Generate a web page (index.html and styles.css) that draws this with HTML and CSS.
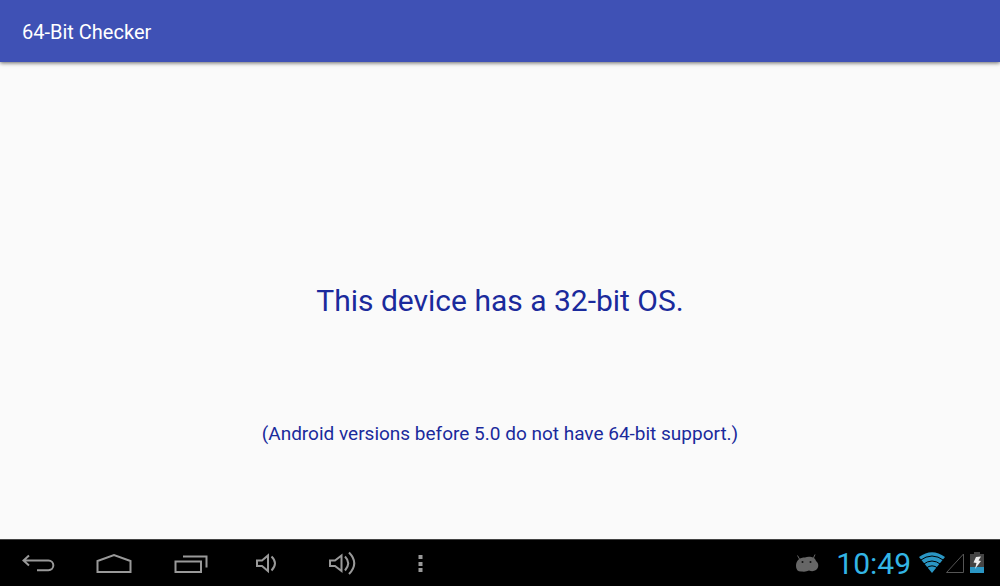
FILE: index.html
```html
<!DOCTYPE html>
<html lang="en">
<head>
    <meta charset="utf-8">
    <title>64-Bit Checker</title>
    <link rel="stylesheet" href="styles.css">
</head>
<body>
    <header class="app-bar">
        <h1>64-Bit Checker</h1>
    </header>
    <main class="content">
        <p class="result">This device has a 32-bit OS.</p>
        <p class="note">(Android versions before 5.0 do not have 64-bit support.)</p>
    </main>
    <footer class="system-bar">
        <nav class="nav-keys">
            <button type="button" aria-label="Back">
                <svg width="36" height="24" viewBox="0 0 36 24">
                    <path d="M9 4.500 3.500 9.500 9 14.500M4 9.500H28.500a4.700 4.700 0 0 1 0 9.700H17"/>
                </svg>
            </button>
            <button type="button" aria-label="Home">
                <svg width="36" height="24" viewBox="0 0 36 24">
                    <path d="M1.500 21V10L18 4 34.500 10V21Z"/>
                </svg>
            </button>
            <button type="button" aria-label="Recent apps">
                <svg width="36" height="24" viewBox="0 0 36 24">
                    <path d="M3.500 10.500H29V21H3.500ZM11 5.500H34.500V16.500"/>
                </svg>
            </button>
            <button type="button" aria-label="Volume down">
                <svg width="36" height="24" viewBox="0 0 36 24">
                    <path d="M9 9.500H14L20 4.500V20L14 15H9ZM23.500 5.500Q30.500 12.200 23.500 19.500"/>
                </svg>
            </button>
            <button type="button" aria-label="Volume up">
                <svg width="36" height="24" viewBox="0 0 36 24">
                    <path d="M6 9.500H11L17.500 4.500V20L11 15H6ZM21 5.500Q27.500 12.200 21 19.500M25 1.500Q35.500 12.200 25 23"/>
                </svg>
            </button>
            <button type="button" class="menu-key" aria-label="Menu">
                <svg width="36" height="24" viewBox="0 0 36 24">
                    <path class="solid" d="M16.500 4h4v4h-4zM16.500 11h4v4h-4zM16.500 17h4v4h-4z"/>
                </svg>
            </button>
        </nav>
        <div class="status">
            <svg class="debug" width="24" height="24" viewBox="0 0 24 24">
                <path class="antenna" d="M4.500 8 2.500 4.500M18.500 7 20 3.500"/>
                <path d="M1 15C1 9 5 6.500 10 6.500 14 5 20 6 21 10 24 12 24 17 21 19Q18 21 14 19.500 11 21 7 20.500 1 21 1 15Z"/>
                <circle class="eye" cx="7.500" cy="11" r="1"/>
                <circle class="eye" cx="15.500" cy="11" r="1"/>
            </svg>
            <time class="clock">10:49</time>
            <svg class="wifi" width="26" height="24" viewBox="0 0 26 24">
                <path class="fan" d="M0 6Q13-3.500 26 6L13 22Z"/>
                <path class="gap" d="M1 9.500Q13 .5 25 9.500M4 13.500Q13 6.500 22 13.500M7 17.200Q13 12.500 19 17.200"/>
            </svg>
            <svg class="signal" width="20" height="24" viewBox="0 0 20 24">
                <path d="M1.500 21.500 18.500 3V21.500Z"/>
            </svg>
            <svg class="battery" width="14" height="24" viewBox="0 0 14 24">
                <path class="case" d="M4 1H10V3H14V22H0V3H4Z"/>
                <path class="charge" d="M0 16H14V22H0Z"/>
                <path class="bolt" d="M6 6 11 5.500 8.500 9.500 11 10 5 18 6.500 12 3.500 11.500Z"/>
            </svg>
        </div>
    </footer>
</body>
</html>
```
FILE: styles.css
```css
html, body {
    height: 100%;
    margin: 0;
}
body {
    display: flex;
    flex-direction: column;
    background-color: #fafafa;
    font-family: Roboto, "Noto Sans", sans-serif;
}

/* App bar */
.app-bar {
    padding: 20px 22px 18px;
    background-color: #3f51b5;
    box-shadow: 0 1px 4px rgba(0, 0, 0, 0.6);
}
.app-bar h1 {
    margin: 0;
    color: #fff;
    font-size: 20px;
    font-weight: 400;
    line-height: 24px;
}

/* The result sits in the middle, the note halfway below it. */
.content {
    flex: 1;
    display: grid;
    grid-template-rows: 1fr auto 1fr;
    justify-items: center;
    color: #1a2a9c;
    text-align: center;
}
.content p {
    margin: 0;
}
.result {
    grid-row: 2;
    font-size: 30px;
    line-height: 36px;
}
.note {
    grid-row: 3;
    align-self: center;
    padding-top: 10px;
    font-size: 19px;
    line-height: 24px;
}

/* System bar */
.system-bar {
    display: flex;
    justify-content: space-between;
    border-top: 1px solid #444;
    background-color: #000;
}
.nav-keys, .status {
    display: flex;
    align-items: center;
}
.nav-keys button {
    width: 76px;
    height: 46px;
    padding: 0;
    border: 0;
    background: none;
}
.nav-keys .menu-key {
    width: 80px;
}
svg {
    display: block;
    margin: 0 auto;
}
.nav-keys path {
    fill: none;
    stroke: #999;
    stroke-width: 2;
}
.nav-keys .solid {
    fill: #999;
    stroke: none;
}
.status {
    padding-right: 16px;
}
.debug {
    margin-right: 17px;
    fill: #666;
}
.antenna {
    stroke: #666;
    stroke-width: 1;
}
.eye {
    fill: #111;
}
.clock {
    margin-right: 8px;
    padding-top: 2px;
    color: #33b5e5;
    font-size: 30px;
    line-height: 44px;
}
.fan {
    fill: #2a96c4;
}
.gap {
    fill: none;
    stroke: #000;
    stroke-width: 1;
}
.signal {
    margin-right: 5px;
    fill: none;
    stroke: #555;
}
.case {
    fill: #444;
}
.charge {
    fill: #2a96c4;
}
.bolt {
    fill: #eee;
}
```
